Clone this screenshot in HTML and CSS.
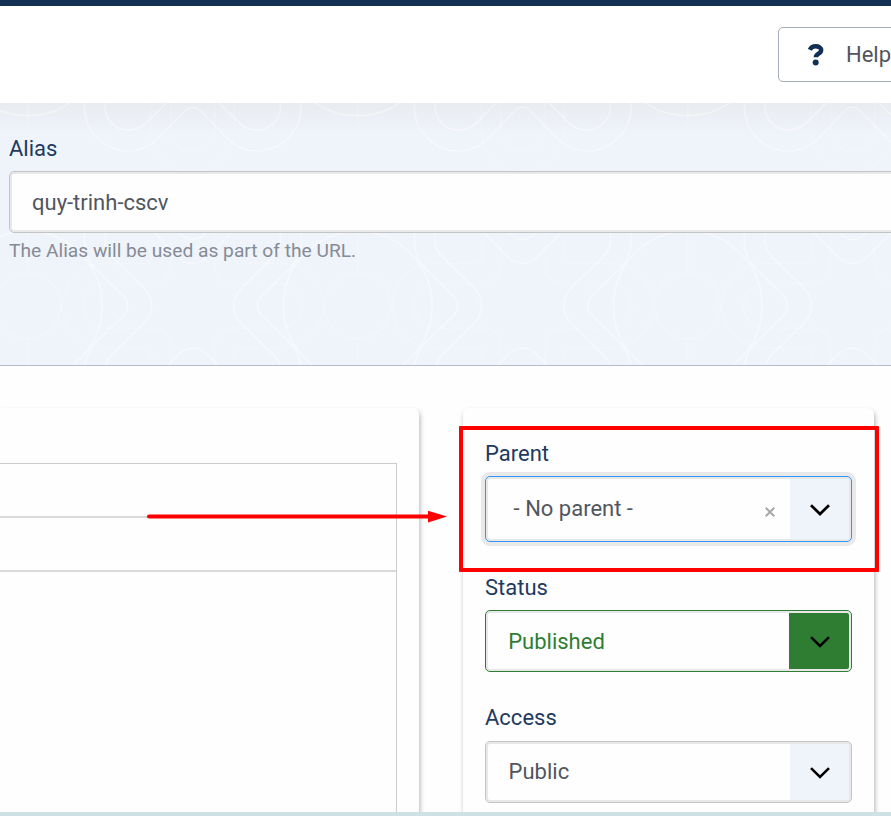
FILE: index.html
```html
<!DOCTYPE html>
<html lang="en">
<head>
<meta charset="utf-8">
<title>Edit</title>
<link rel="stylesheet" href="styles.css">
</head>
<body>
<div class="page">
  <div class="topbar"></div>
  <header class="toolbar">
    <button class="help">
      <svg class="help-icon" viewBox="0 0 16 22" width="16" height="22"><path d="M1.8 5.8C3 3.4 5 2.3 7.6 2.3c3.2 0 5.5 1.4 5.5 3.9 0 3.8-5.2 3.2-5.2 7.1" fill="none" stroke="#132f53" stroke-width="4.5"/><circle cx="7.7" cy="18.6" r="3" fill="#132f53"/></svg>
      <span>Help</span>
    </button>
  </header>
  <section class="hero">
    <svg class="hero-pattern" viewBox="-1323 9 2673 786" width="891" height="262">
      <defs>
        <g id="quarter" fill="none">
          <g stroke="#fff" stroke-opacity=".32" stroke-width="4">
            <path d="M368 400V468Q368 490 390 490H506A128 128 0 0 1 637 617"/>
            <path d="M311 400V490Q311 550 372 550H506A67 67 0 0 1 573 617"/>
          </g>
          <g stroke="#fff" stroke-opacity=".68" stroke-width="4">
            <path d="M508 400V422Q508 448 487 470L390 565Q368 590 368 617"/>
            <path d="M570 400V430Q568 470 540 502L452 588Q440 602 440 617"/>
            <path d="M361 398L295 464Q273 490 245 490"/>
            <path d="M286 398Q268 418 245 418"/>
          </g>
        </g>
        <g id="half">
          <use href="#quarter"/>
          <use href="#quarter" transform="translate(0 1234) scale(1 -1)"/>
          <g fill="none" stroke="#fff" stroke-opacity=".6" stroke-width="4">
            <path d="M245 22Q260 22 270 34L350 117Q388 153 438 153A132 132 0 0 0 570 20V0"/>
            <path d="M315 0L378 63Q402 90 438 90A70 70 0 0 0 508 20V0"/>
          </g>
          <g fill="none" stroke="#fff" stroke-opacity=".28" stroke-width="4">
            <path d="M311 0V88A66 66 0 0 1 245 155"/>
            <path d="M370 0V90A125 125 0 0 1 245 215"/>
          </g>
        </g>
        <pattern id="tile" patternUnits="userSpaceOnUse" x="245" y="0" width="990" height="800">
          <g transform="translate(-245 0)">
            <use href="#half"/>
            <use href="#half" transform="translate(1480 0) scale(-1 1)"/>
            <g fill="none" stroke="#fff" stroke-width="4">
              <circle cx="740" cy="617" r="223" stroke-opacity=".68"/>
              <circle cx="740" cy="-176" r="223" stroke-opacity=".6"/>
              <circle cx="740" cy="617" r="99" stroke-opacity=".35"/>
              <path d="M740 396V517M740 717V800M740 0V72" stroke-opacity=".35"/>
            </g>
          </g>
        </pattern>
      </defs>
      <rect x="-1323" y="9" width="2673" height="786" fill="url(#tile)"/>
    </svg>
    <div class="alias">
      <label class="label" for="alias">Alias</label>
      <div class="control wide" id="alias">quy-trinh-cscv</div>
      <p class="hint">The Alias will be used as part of the URL.</p>
    </div>
  </section>
  <main class="main">
    <section class="card editor-card">
      <div class="editor">
        <div class="editor-row"></div>
        <div class="editor-row"></div>
      </div>
    </section>
    <section class="card side">
      <div class="field parent">
        <div class="label">Parent</div>
        <div class="control select focused">
          <span class="value">- No parent -</span>
          <svg class="clear" viewBox="0 0 10 10" width="10" height="10"><path d="M.7 .7L9.3 9.3M9.3 .7L.7 9.3" stroke="#a6a9ad" stroke-width="2"/></svg>
          <span class="toggle"><svg viewBox="0 0 20 12" width="20" height="12"><path d="M1 1.2L10 10L19 1.2" fill="none" stroke="#000" stroke-width="2.7"/></svg></span>
        </div>
      </div>
      <div class="field status">
        <div class="label">Status</div>
        <div class="control select published">
          <span class="value">Published</span>
          <span class="toggle"><svg viewBox="0 0 20 12" width="20" height="12"><path d="M1 1.2L10 10L19 1.2" fill="none" stroke="#000" stroke-width="2.5"/></svg></span>
        </div>
      </div>
      <div class="field access">
        <div class="label">Access</div>
        <div class="control select">
          <span class="value">Public</span>
          <span class="toggle"><svg viewBox="0 0 20 12" width="20" height="12"><path d="M1 1.2L10 10L19 1.2" fill="none" stroke="#000" stroke-width="2.5"/></svg></span>
        </div>
      </div>
    </section>
  </main>
  <div class="bottom"></div>
  <div class="highlight"></div>
  <svg class="arrow" viewBox="0 0 302 14" width="302" height="14"><path d="M3 6.5H284" stroke="#f00" stroke-width="4" stroke-linecap="round"/><path d="M282 .8L301 6.5L282 12.5Z" fill="#f00"/></svg>
</div>
</body>
</html>
```
FILE: styles.css
```css
* { box-sizing: border-box; }
body {
  margin: 0;
  background: #fefefe;
  font-family: Roboto, "Liberation Sans", sans-serif;
  font-size: 22px;
  line-height: 33px;
  color: #50565e;
}
.page {
  position: relative;
  width: 891px;
  height: 816px;
  overflow: hidden;
  display: flex;
  flex-direction: column;
}
.topbar { height: 6px; flex: none; background: #132f53; }
.toolbar {
  height: 97px;
  flex: none;
  display: flex;
  justify-content: flex-end;
  padding-top: 21px;
  background: #fff;
}
.help {
  display: flex;
  align-items: center;
  gap: 22px;
  flex: none;
  width: 150px;
  height: 55px;
  margin-right: -37px;
  padding: 0 0 0 29px;
  border: 1px solid #a4adb8;
  border-radius: 5px;
  background: #fff;
  font: inherit;
  color: #50565e;
}
.hero {
  position: relative;
  height: 263px;
  flex: none;
  padding: 29px 0 0 9px;
  background: linear-gradient(#e8ebef, #ebeef3 10px, #eff4fb 32px);
  border-bottom: 1px solid #b5bcc6;
}
.hero-pattern { position: absolute; left: 0; top: 0; opacity: .82; }
.alias { position: relative; }
.label { display: block; color: #1f3a5f; }
.control {
  height: 62px;
  margin-top: 6px;
  border: 1px solid #c3c4c6;
  border-radius: 5px;
  background: #fefefe;
  box-shadow: inset 0 0 0 2px #e8e8e8;
}
.wide { width: 920px; padding: 14px 22px; }
.hint { margin: 3px 0 0; font-size: 19.2px; line-height: 29px; color: #868b95; }
.main { flex: 1; min-height: 0; display: flex; gap: 43px; padding-top: 42px; overflow: hidden; }
.card {
  flex: none;
  height: 440px;
  background: #fefefe;
  border-radius: 6px;
  box-shadow: 1px 3px 5px rgba(0,0,0,.3);
}
.editor-card { width: 419px; padding: 55px 22px 0 0; border-top-left-radius: 0; }
.editor { height: 385px; border: solid #ccc; border-width: 1px 1px 0 0; }
.editor-row { height: 54px; border-bottom: 2px solid #d9d9d9; }
.side { width: 411.5px; margin-left: .5px; padding: 29px 22px 0 22.5px; }
.field { width: 367px; }
.parent { height: 134px; }
.status { height: 130px; }
.access .control { margin-top: 7px; }
.access .value { padding-bottom: 2px; }
.select { display: flex; align-items: center; padding: 2px; }
.value { flex: 1; padding-left: 20.6px; }
.toggle {
  align-self: stretch;
  width: 59.5px;
  padding: 1px 0 0 1px;
  display: flex;
  align-items: center;
  justify-content: center;
  background: #eff4fb;
  border-radius: 0 2px 2px 0;
}
.focused {
  height: 66px;
  border-color: #2f96f5;
  box-shadow: inset 0 0 0 2px #e8e8e8, 0 0 0 4px #e9e9e9;
}
.focused .value { padding: 0 0 2px 25.6px; }
.clear { margin: 6px 15px 0 0; }
.published { border-color: #2f7d32; color: #2f7d32; }
.published .value { padding-left: 20.2px; }
.published .toggle { width: 60px; background: #2f7d32; }
.bottom { height: 4px; flex: none; background: #cee1e6; }
.highlight {
  position: absolute;
  left: 459px;
  top: 426px;
  width: 420px;
  height: 146px;
  border: 4px solid #f00;
  border-radius: 1px;
}
.arrow { position: absolute; left: 146px; top: 510px; }
```
